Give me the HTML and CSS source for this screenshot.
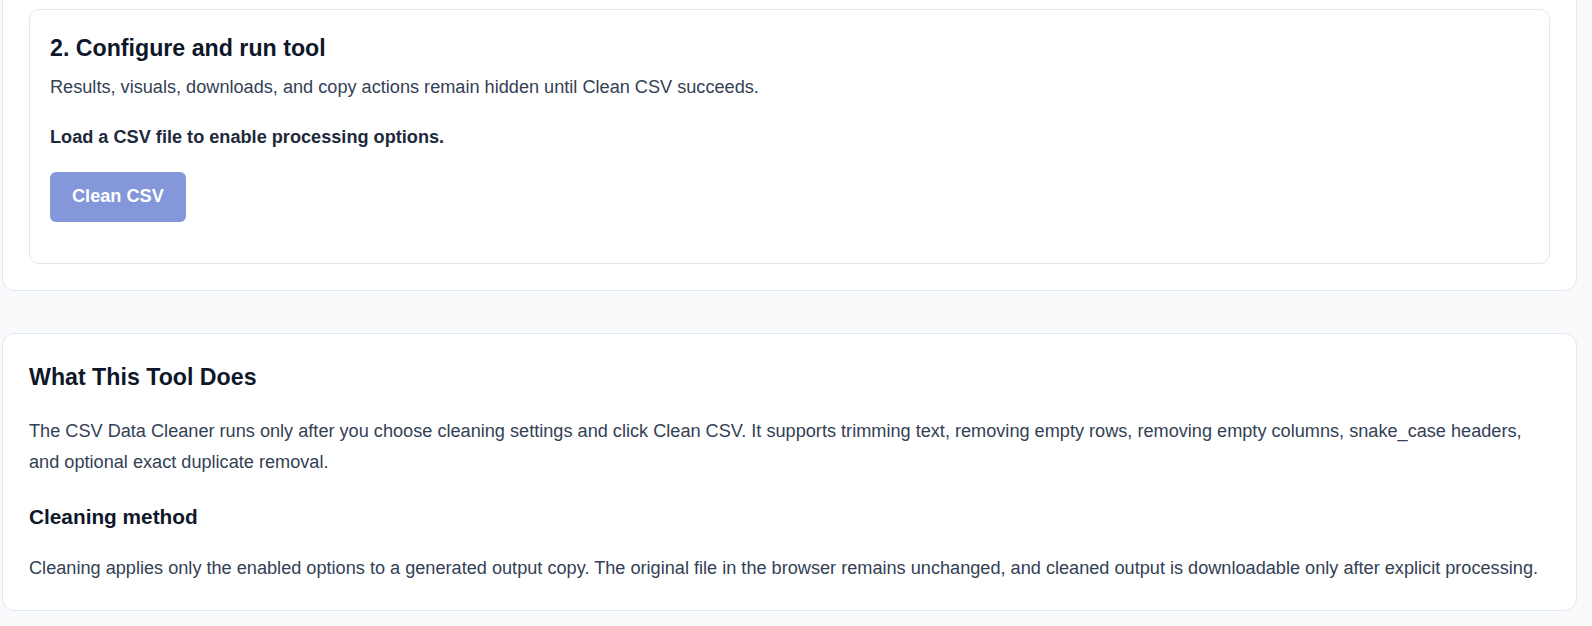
FILE: index.html
```html
<!DOCTYPE html>
<html lang="en">

<head>
    <meta charset="UTF-8">
    <meta name="viewport" content="width=device-width, initial-scale=1.0">
    <title>CSV Data Cleaner</title>
    <link rel="stylesheet" href="styles.css">
</head>

<body>
    <main class="page">
        <section class="card tool-card">
            <div class="step">
                <h2 class="step-title">2. Configure and run tool</h2>
                <p class="step-note">Results, visuals, downloads, and copy actions remain hidden until Clean CSV succeeds.</p>
                <p class="step-hint">Load a CSV file to enable processing options.</p>
                <button class="btn-primary" type="button" disabled>Clean CSV</button>
            </div>
        </section>

        <section class="card about-card">
            <h2>What This Tool Does</h2>
            <p>The CSV Data Cleaner runs only after you choose cleaning settings and click Clean CSV. It supports trimming text, removing empty rows, removing empty columns, snake_case headers, and optional exact duplicate removal.</p>
            <h3>Cleaning method</h3>
            <p>Cleaning applies only the enabled options to a generated output copy. The original file in the browser remains unchanged, and cleaned output is downloadable only after explicit processing.</p>
        </section>
    </main>
</body>

</html>
```

FILE: styles.css
```css
body {
    margin: 0;
    background-color: #f8fafc;
    font-family: "Liberation Sans", Arial, sans-serif;
    font-size: 18.15px;
    color: #334155;
}

.page {
    width: 1575px;
    margin: -18px 0 0 2px;
}

.card {
    background-color: #ffffff;
    border: 1px solid #e2e8f0;
    border-radius: 12px;
    padding: 26px;
    box-sizing: border-box;
}

.tool-card {
    margin-bottom: 42px;
}

.step {
    border: 1px solid #e2e8f0;
    border-radius: 10px;
    padding: 21px 20px 20px;
}

h2,
h3 {
    color: #0f172a;
    margin: 0;
    line-height: 1.5;
}

h2 {
    font-size: 23.2px;
}

h3 {
    font-size: 20.8px;
    margin-bottom: 21px;
}

p {
    margin: 0;
    line-height: 1.7;
}

.step-title {
    margin-bottom: 6px;
}

.step-note {
    margin-bottom: 19px;
}

.step-hint {
    font-weight: bold;
    color: #1e293b;
    margin-bottom: 19px;
}

.btn-primary {
    display: block;
    font-family: inherit;
    font-size: 18.15px;
    font-weight: bold;
    line-height: 1.2;
    color: #ffffff;
    background-color: #8397da;
    border: none;
    border-radius: 6px;
    padding: 14.5px 22px;
    margin-bottom: 21px;
}

.about-card h2 {
    margin-bottom: 21px;
}

.about-card p {
    margin-bottom: 23px;
}

.about-card p:last-child {
    margin-bottom: 0;
}
```
